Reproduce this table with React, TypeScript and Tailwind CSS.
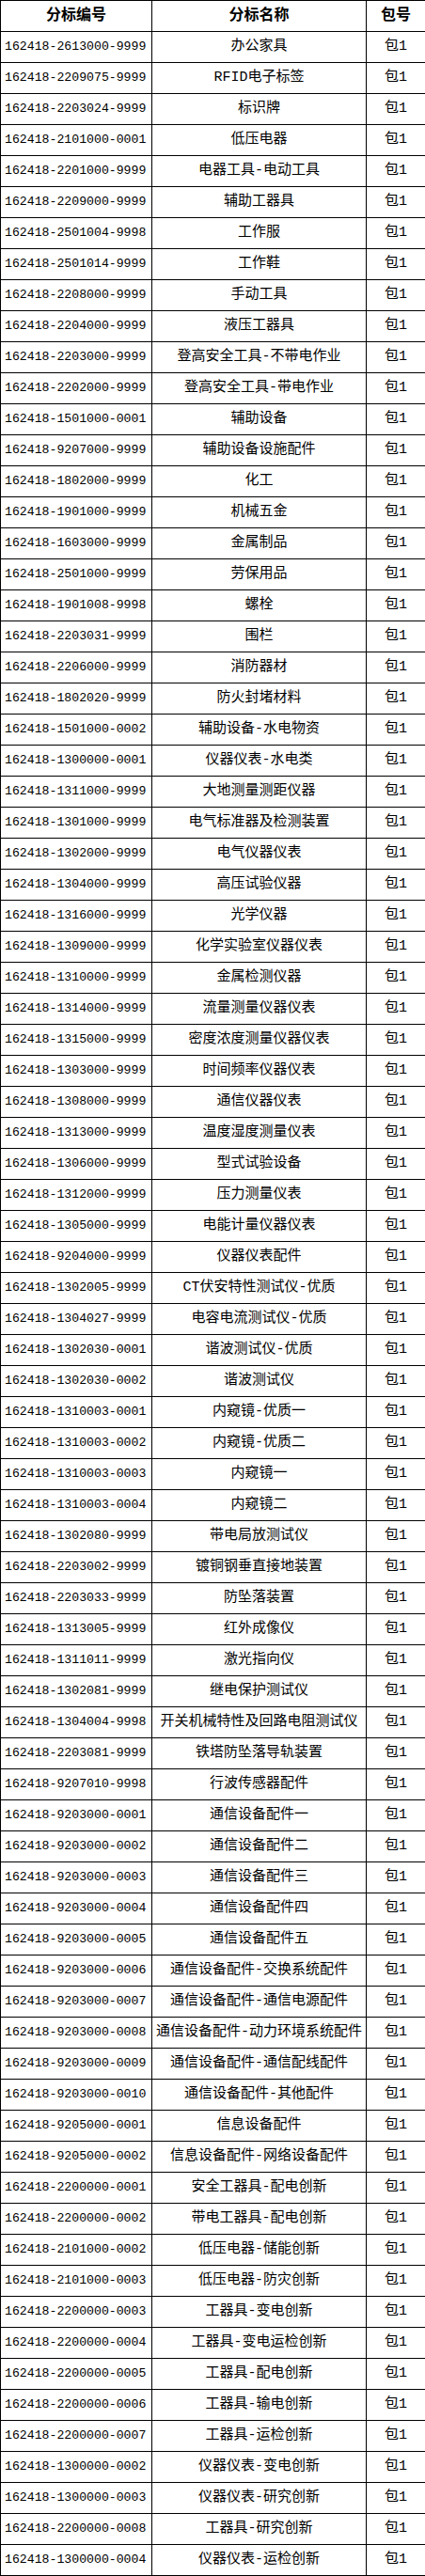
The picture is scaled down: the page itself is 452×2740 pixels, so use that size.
const rows: [string, string][] = [
  ["162418-2613000-9999", "办公家具"],
  ["162418-2209075-9999", "RFID电子标签"],
  ["162418-2203024-9999", "标识牌"],
  ["162418-2101000-0001", "低压电器"],
  ["162418-2201000-9999", "电器工具-电动工具"],
  ["162418-2209000-9999", "辅助工器具"],
  ["162418-2501004-9998", "工作服"],
  ["162418-2501014-9999", "工作鞋"],
  ["162418-2208000-9999", "手动工具"],
  ["162418-2204000-9999", "液压工器具"],
  ["162418-2203000-9999", "登高安全工具-不带电作业"],
  ["162418-2202000-9999", "登高安全工具-带电作业"],
  ["162418-1501000-0001", "辅助设备"],
  ["162418-9207000-9999", "辅助设备设施配件"],
  ["162418-1802000-9999", "化工"],
  ["162418-1901000-9999", "机械五金"],
  ["162418-1603000-9999", "金属制品"],
  ["162418-2501000-9999", "劳保用品"],
  ["162418-1901008-9998", "螺栓"],
  ["162418-2203031-9999", "围栏"],
  ["162418-2206000-9999", "消防器材"],
  ["162418-1802020-9999", "防火封堵材料"],
  ["162418-1501000-0002", "辅助设备-水电物资"],
  ["162418-1300000-0001", "仪器仪表-水电类"],
  ["162418-1311000-9999", "大地测量测距仪器"],
  ["162418-1301000-9999", "电气标准器及检测装置"],
  ["162418-1302000-9999", "电气仪器仪表"],
  ["162418-1304000-9999", "高压试验仪器"],
  ["162418-1316000-9999", "光学仪器"],
  ["162418-1309000-9999", "化学实验室仪器仪表"],
  ["162418-1310000-9999", "金属检测仪器"],
  ["162418-1314000-9999", "流量测量仪器仪表"],
  ["162418-1315000-9999", "密度浓度测量仪器仪表"],
  ["162418-1303000-9999", "时间频率仪器仪表"],
  ["162418-1308000-9999", "通信仪器仪表"],
  ["162418-1313000-9999", "温度湿度测量仪表"],
  ["162418-1306000-9999", "型式试验设备"],
  ["162418-1312000-9999", "压力测量仪表"],
  ["162418-1305000-9999", "电能计量仪器仪表"],
  ["162418-9204000-9999", "仪器仪表配件"],
  ["162418-1302005-9999", "CT伏安特性测试仪-优质"],
  ["162418-1304027-9999", "电容电流测试仪-优质"],
  ["162418-1302030-0001", "谐波测试仪-优质"],
  ["162418-1302030-0002", "谐波测试仪"],
  ["162418-1310003-0001", "内窥镜-优质一"],
  ["162418-1310003-0002", "内窥镜-优质二"],
  ["162418-1310003-0003", "内窥镜一"],
  ["162418-1310003-0004", "内窥镜二"],
  ["162418-1302080-9999", "带电局放测试仪"],
  ["162418-2203002-9999", "镀铜钢垂直接地装置"],
  ["162418-2203033-9999", "防坠落装置"],
  ["162418-1313005-9999", "红外成像仪"],
  ["162418-1311011-9999", "激光指向仪"],
  ["162418-1302081-9999", "继电保护测试仪"],
  ["162418-1304004-9998", "开关机械特性及回路电阻测试仪"],
  ["162418-2203081-9999", "铁塔防坠落导轨装置"],
  ["162418-9207010-9998", "行波传感器配件"],
  ["162418-9203000-0001", "通信设备配件一"],
  ["162418-9203000-0002", "通信设备配件二"],
  ["162418-9203000-0003", "通信设备配件三"],
  ["162418-9203000-0004", "通信设备配件四"],
  ["162418-9203000-0005", "通信设备配件五"],
  ["162418-9203000-0006", "通信设备配件-交换系统配件"],
  ["162418-9203000-0007", "通信设备配件-通信电源配件"],
  ["162418-9203000-0008", "通信设备配件-动力环境系统配件"],
  ["162418-9203000-0009", "通信设备配件-通信配线配件"],
  ["162418-9203000-0010", "通信设备配件-其他配件"],
  ["162418-9205000-0001", "信息设备配件"],
  ["162418-9205000-0002", "信息设备配件-网络设备配件"],
  ["162418-2200000-0001", "安全工器具-配电创新"],
  ["162418-2200000-0002", "带电工器具-配电创新"],
  ["162418-2101000-0002", "低压电器-储能创新"],
  ["162418-2101000-0003", "低压电器-防灾创新"],
  ["162418-2200000-0003", "工器具-变电创新"],
  ["162418-2200000-0004", "工器具-变电运检创新"],
  ["162418-2200000-0005", "工器具-配电创新"],
  ["162418-2200000-0006", "工器具-输电创新"],
  ["162418-2200000-0007", "工器具-运检创新"],
  ["162418-1300000-0002", "仪器仪表-变电创新"],
  ["162418-1300000-0003", "仪器仪表-研究创新"],
  ["162418-2200000-0008", "工器具-研究创新"],
  ["162418-1300000-0004", "仪器仪表-运检创新"],
];

const cell = "h-[33px] border border-black p-0 align-middle";

export default function App() {
  return (
    <div className="w-[452px] bg-white text-black font-['Liberation_Mono','Noto_Sans_CJK_SC',monospace]">
      <table className="w-[452px] table-fixed border-collapse">
        <colgroup>
          <col className="w-[161px]" />
          <col className="w-[228px]" />
          <col className="w-[63px]" />
        </colgroup>
        <thead>
          <tr>
            {["分标编号", "分标名称", "包号"].map((h) => (
              <th key={h} className={`${cell} text-center text-[16px] font-bold`}>
                {h}
              </th>
            ))}
          </tr>
        </thead>
        <tbody>
          {rows.map(([code, name]) => (
            <tr key={code}>
              <td className={`${cell} pl-[4px] text-left text-[13.2px] whitespace-nowrap`}>{code}</td>
              <td className={`${cell} text-center text-[15px] whitespace-nowrap`}>{name}</td>
              <td className={`${cell} text-center text-[15px]`}>包1</td>
            </tr>
          ))}
        </tbody>
      </table>
    </div>
  );
}
